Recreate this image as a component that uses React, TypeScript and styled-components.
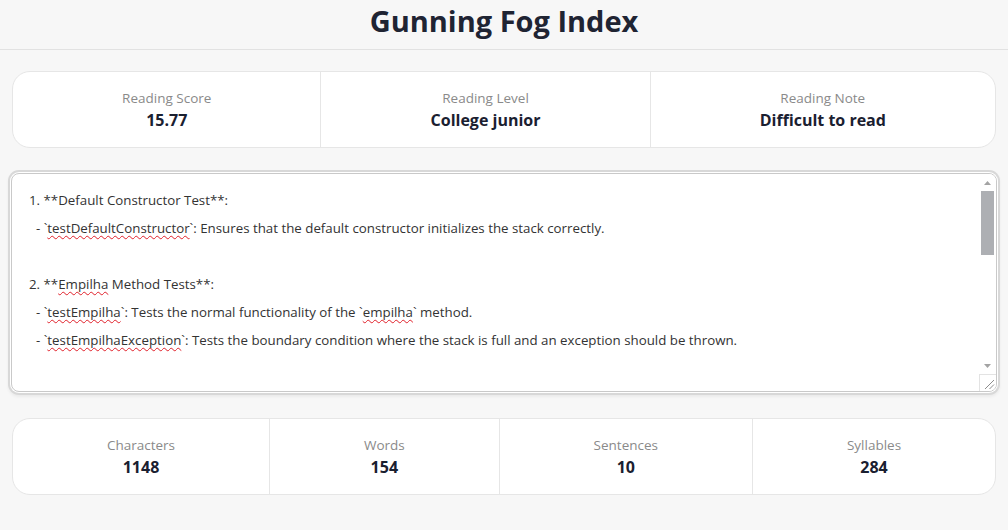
import React from 'react'
import styled, { createGlobalStyle } from 'styled-components';

const readingStats = [
  { label: 'Reading Score', value: '15.77' },
  { label: 'Reading Level', value: 'College junior' },
  { label: 'Reading Note', value: 'Difficult to read' },
];

const textStats = [
  { label: 'Characters', value: '1148' },
  { label: 'Words', value: '154' },
  { label: 'Sentences', value: '10' },
  { label: 'Syllables', value: '284' },
];

// words in {braces} get the spell-check squiggle
const lines = [
  '1. **Default Constructor Test**:',
  '  - `{testDefaultConstructor}`: Ensures that the default constructor initializes the stack correctly.',
  '',
  '2. **{Empilha} Method Tests**:',
  '  - `{testEmpilha}`: Tests the normal functionality of the `{empilha}` method.',
  '  - `{testEmpilhaException}`: Tests the boundary condition where the stack is full and an exception should be thrown.',
  '',
  '3. **{Desempilha} Method Tests**:',
  '  - `{testDesempilha}`: Tests the normal functionality of the `{desempilha}` method.',
  '  - `{testDesempilhaException}`: Tests the boundary condition where the stack is empty and an exception should be thrown.',
  '',
  '4. **{Topo} Method Tests**:',
  '  - `{testTopo}`: Tests the normal functionality of the `{topo}` method.',
  '  - `{testTopoException}`: Tests the boundary condition where the stack is empty and an exception should be thrown.',
];

const renderLine = (line: string) =>
  line.split(/(\{[^}]+\})/).map((part, i) =>
    part.startsWith('{') ? <Misspelled key={i}>{part.slice(1, -1)}</Misspelled> : part
  );

const Arrow = ({ down }: { down?: boolean }) => (
  <svg width="9" height="6" viewBox="0 0 9 6">
    <path d={down ? 'M1 1 L4.5 5 L8 1 Z' : 'M1 5 L4.5 1 L8 5 Z'} fill="#a3a3a3" />
  </svg>
);

const Grip = () => (
  <svg width="16" height="16" viewBox="0 0 16 16">
    <path d="M14 5 L5 14 M14 9.5 L9.5 14" stroke="#8c8c8c" strokeWidth="1" />
  </svg>
);

const App = () => {
  return (
    <>
      <GlobalStyle />
      <Header>
        <h1>Gunning Fog Index</h1>
      </Header>
      <Main>
        <StatCard>
          {readingStats.map((s) => (
            <Stat key={s.label}>
              <Label>{s.label}</Label>
              <Value>{s.value}</Value>
            </Stat>
          ))}
        </StatCard>

        <Editor>
          <TextPane role="textbox" aria-multiline="true">
            {lines.map((l, i) => (
              <Line key={i}>{l ? renderLine(l) : '\u00a0'}</Line>
            ))}
          </TextPane>
          <ScrollBar>
            <ScrollButton><Arrow /></ScrollButton>
            <Track>
              <Thumb />
            </Track>
            <ScrollButton><Arrow down /></ScrollButton>
            <Resizer><Grip /></Resizer>
          </ScrollBar>
        </Editor>

        <StatCard>
          {textStats.map((s) => (
            <Stat key={s.label}>
              <Label>{s.label}</Label>
              <Value>{s.value}</Value>
            </Stat>
          ))}
        </StatCard>
      </Main>
    </>
  )
}

export default App;

const GlobalStyle = createGlobalStyle`
    body{
        margin: 0;
        background-color: #f7f7f7;
        font-family: "Open Sans", "Noto Sans", sans-serif;
        color: #1f2433;
    }
`;

const Header = styled.header`
    height: 50px;
    box-sizing: border-box;
    border-bottom: 1px solid #e2e2e2;
    padding-top: 2px;
    h1{
        margin: 0;
        text-align: center;
        font-size: 29px;
        line-height: 38px;
        font-weight: 700;
        color: #1f2433;
    }
`;

const Main = styled.main`
    display: flex;
    flex-direction: column;
    gap: 22px;
    padding: 21px 12px;
`;

const StatCard = styled.section`
    display: flex;
    background-color: #fff;
    border: 1px solid #e6e6e6;
    border-radius: 18px;
`;

const Stat = styled.div`
    flex: 1 1 auto;
    display: flex;
    flex-direction: column;
    align-items: center;
    padding: 16px 0 16px;
    & + &{
        border-left: 1px solid #e6e6e6;
    }
`;

const Label = styled.span`
    font-size: 13.5px;
    line-height: 20px;
    margin-bottom: 1px;
    color: #8a8a8a;
`;

const Value = styled.span`
    font-size: 16px;
    line-height: 22px;
    font-weight: 700;
    color: #1a2030;
`;

const Editor = styled.div`
    display: flex;
    height: 219px;
    box-sizing: border-box;
    margin: 3px -1px 4px;
    background-color: #fff;
    border: 1px solid #c9c9c9;
    border-radius: 8px;
    box-shadow: 0 0 0 1px #fff, 0 0 0 3px #d8d8d8, 0 2px 3px 3px rgba(0,0,0,0.05);
    overflow: hidden;
`;

const TextPane = styled.div`
    flex: 1;
    overflow: hidden;
    padding: 12px 17px;
    font-size: 13.3px;
    color: #333;
`;

const Line = styled.div`
    line-height: 28px;
    white-space: pre-wrap;
`;

const Misspelled = styled.span`
    text-decoration: underline wavy #e0202a;
    text-decoration-thickness: 1px;
    text-decoration-skip-ink: none;
    text-underline-offset: 2px;
`;

const ScrollBar = styled.div`
    width: 17px;
    display: flex;
    flex-direction: column;
    background-color: #fff;
`;

const ScrollButton = styled.div`
    height: 17px;
    display: flex;
    align-items: center;
    justify-content: center;
`;

const Track = styled.div`
    flex: 1;
    padding: 0 2px;
`;

const Thumb = styled.div`
    height: 64px;
    background-color: #adafb3;
`;

const Resizer = styled.div`
    height: 16px;
    border-top: 1px solid #e3e3e3;
    border-left: 1px solid #e3e3e3;
    display: flex;
`;
